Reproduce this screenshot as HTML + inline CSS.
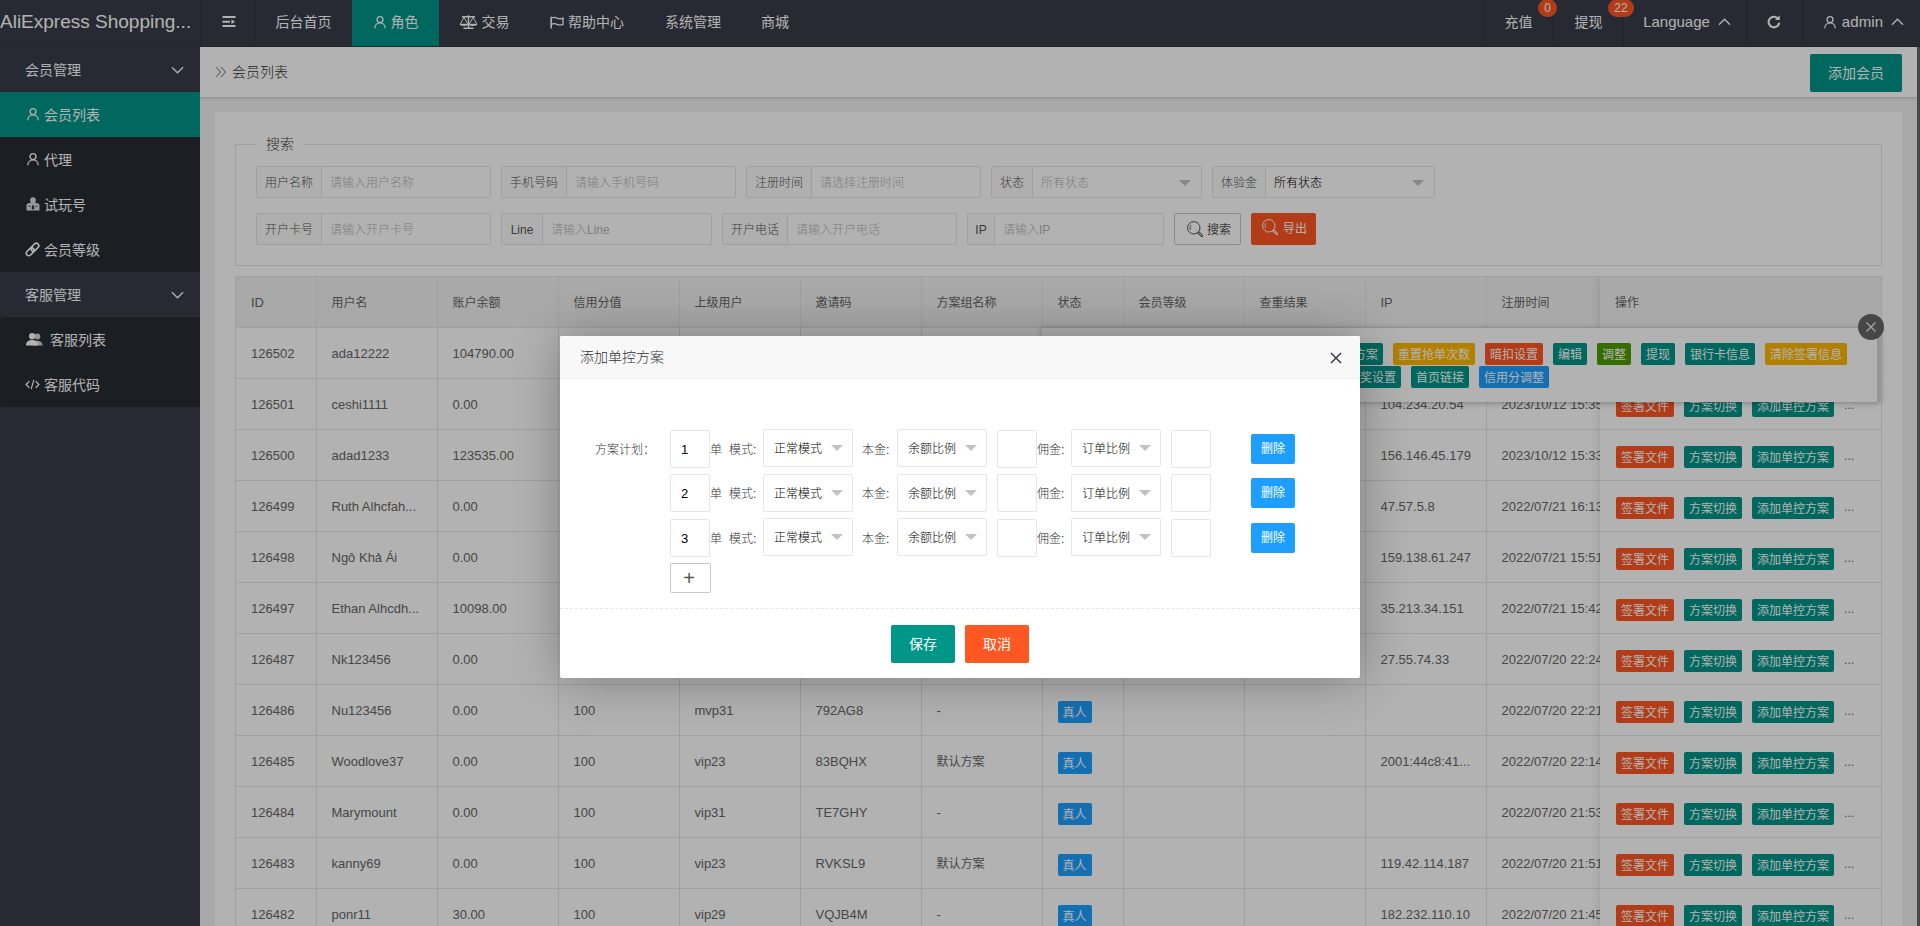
<!DOCTYPE html>
<html lang="zh-CN">
<head>
<meta charset="utf-8">
<title>AliExpress Shopping</title>
<style>
*{box-sizing:border-box;margin:0;padding:0}
html,body{width:1920px;height:926px;overflow:hidden;background:#f2f2f2}
body{font-weight:300;font-family:"Liberation Sans","Noto Sans CJK SC",sans-serif;font-size:14px;color:#666;line-height:1}
#app{position:relative;width:1920px;height:926px;overflow:hidden}
svg{display:inline-block;vertical-align:middle}

/* header */
.hd{font-weight:400;position:absolute;left:0;top:0;width:1920px;height:47px;background:#393D49;border-bottom:1px solid #33363f;color:#fff;z-index:5}
.logo{position:absolute;left:0;top:0;width:200px;height:46px;line-height:43px;font-size:19px;white-space:nowrap;overflow:hidden;color:#fff;letter-spacing:0}
.ni{position:absolute;top:0;height:46px;line-height:44px;text-align:center;font-size:14px;color:#fff;white-space:nowrap}
.ni.on{background:#009688}
.ni .ic{margin-right:4px;position:relative;top:-1px}
.ni.tg{border-left:1px solid #30343f;border-right:1px solid #30343f}
.ni.rb{border-left:1px solid #30343f}
.ni .chevu{margin-left:8px;position:relative;top:-1px}
.bdg{position:absolute;z-index:3;top:-1px;height:18px;line-height:18px;border-radius:9px;background:#FF5722;color:#fff;font-weight:normal;font-size:12px;text-align:center}

/* sidebar */
.sd{font-weight:400;position:absolute;left:0;top:47px;width:200px;height:879px;background:#393D49;color:#fff;z-index:4}
.si{position:relative;height:45px;line-height:47px;font-size:14px;white-space:nowrap;color:#fff}
.si.par{padding-left:25px}
.si.par .chev{position:absolute;right:16px;top:19px}
.si.sub{background:#282b33;padding-left:26px}
.si.sub.on{background:#009688}
.si .ic{margin-right:4px;position:relative;top:-2px}

/* body */
.bd{position:absolute;left:200px;top:47px;width:1717px;height:879px;background:#f2f2f2;overflow:hidden}
.crumb{position:absolute;left:0;top:0;width:1717px;height:50px;background:#fff;box-shadow:0 1px 4px rgba(0,0,0,.18);line-height:50px;padding-left:16px;color:#666;font-size:14px}
.crumb span{margin-left:4px;color:#333}
.addbtn{position:absolute;left:1610px;top:7px;width:92px;height:38px;line-height:38px;border-radius:2px;background:#009688;color:#fff;text-align:center;font-size:14px}
.card{position:absolute;left:15px;top:65px;width:1687px;height:900px;background:#fff}
.fs{position:absolute;left:20px;top:32px;width:1647px;height:122px;border:1px solid #e6e6e6}
.lg{position:absolute;left:20px;top:-10px;background:#fff;padding:0 10px;font-size:14px;line-height:18px;color:#444}
.fg{position:absolute;height:32px;display:flex;border:1px solid #e6e6e6;border-radius:2px;background:#fff}
.fg label{display:block;height:30px;line-height:32px;text-align:center;font-size:12px;color:#555;background:#fbfbfb;border-right:1px solid #e6e6e6}
.fg .inp{width:168px;height:30px;line-height:32px;padding-left:8px;font-size:12px;color:#555;position:relative}
.fg .inp.ph{color:#b5b5b5}
.tri{position:absolute;right:10px;top:13px;border:6px solid transparent;border-top-color:#c2c2c2;border-bottom-width:0}

/* table */
.tw{position:absolute;left:20px;top:164px;width:1647px;height:760px;border-left:1px solid #e6e6e6;border-top:1px solid #e6e6e6;border-right:1px solid #e6e6e6;overflow:hidden}
.tmain{position:absolute;left:0;top:0;width:1364px;overflow:hidden}
.tfix{position:absolute;left:1364px;top:0;width:281px;box-shadow:-1px 0 8px rgba(0,0,0,.12);background:#fff}
.tb{border-collapse:collapse;table-layout:fixed;width:1410px}
.tfix .tb{width:281px}
.tb th,.tb td{border-right:1px solid #e6e6e6;border-bottom:1px solid #e6e6e6;height:51px;padding:0;text-align:left;font-weight:normal;font-size:12px;color:#666}
.lt{font-size:13px}
.tb th{height:50px;background:#f2f2f2}
.cell{padding:0 15px;height:28px;line-height:30px;white-space:nowrap;overflow:hidden}
.xs{display:inline-block;height:22px;line-height:24px;overflow:hidden;padding:0 5px;font-size:12px;color:#fff;border-radius:2px;white-space:nowrap;vertical-align:middle;font-weight:400}
td .cell>.xs.blue{position:relative;top:1px}
.xs.red{background:#FF5722}.xs.teal{background:#009688}.xs.blue{background:#1E9FFF}.xs.warm{background:#FFB800}.xs.green{background:#4E9D00}
.ops{padding-top:4px;padding-left:16px;height:32px;line-height:28px}
.ops .xs{margin-right:10px}
.more{font-size:12px;color:#666;vertical-align:middle;position:relative;top:-1px}

/* tips popover */
.tips{position:absolute;left:842px;top:281px;width:838px;height:74px;background:#fff;box-shadow:0 1px 6px rgba(0,0,0,.3);padding:15px 0 0 0;overflow:hidden}
.tl{position:absolute;height:22px;white-space:nowrap;display:flex}
.tl .xs{margin-left:10px;display:block}
.tsb{position:absolute;right:0;top:0;width:3px;height:74px;background:#d9d9d9}
.tclose{position:absolute;left:1658px;top:267px;width:26px;height:26px;border-radius:13px;background:#666;color:#eee;text-align:center;line-height:24px}

.vsb{position:absolute;left:1917px;top:47px;width:3px;height:879px;background:#676767}
.shade{position:absolute;left:0;top:0;width:1920px;height:926px;background:rgba(0,0,0,.3);z-index:10}

/* modal */
.modal{position:absolute;left:560px;top:336px;width:800px;height:342px;background:#fff;box-shadow:1px 1px 50px rgba(0,0,0,.3);z-index:20;border-radius:2px}
.mt{height:43px;line-height:42px;padding-left:20px;font-size:14px;color:#333;background:#F8F8F8;border-bottom:1px solid #eee;border-radius:2px 2px 0 0}
.mx{position:absolute;right:18px;top:16px}
.mbody{position:absolute;left:0;top:0;width:0;height:0;z-index:21}
.mbody>div{position:absolute}
.ptx{height:38px;line-height:41px;font-size:12px;color:#333;white-space:nowrap}
.pin{width:40px;height:38px;line-height:38px;border:1px solid #e6e6e6;border-radius:2px;padding-left:10px;font-size:13px;color:#000}
.psel{width:90px;height:38px;line-height:39px;border:1px solid #e6e6e6;border-radius:2px;padding-left:10px;font-size:12px;color:#000;white-space:nowrap}
.psel i{position:absolute;right:9px;top:15px;border:6px solid transparent;border-top-color:#c2c2c2;border-bottom-width:0}
.pdel{width:44px;height:30px;line-height:30px;background:#1E9FFF;color:#fff;font-size:12px;text-align:center;border-radius:2px}
.padd{width:41px;height:30px;line-height:29px;border:1px solid #c9c9c9;border-radius:2px;text-align:center;padding-right:3px;font-size:20px;color:#555}
.pline{left:560px;top:608px;width:800px;height:0;border-top:1px dashed #e6e6e6}
.pbtn{top:625px;width:64px;height:38px;line-height:38px;color:#fff;font-size:14px;text-align:center;border-radius:2px}

.lat{font-size:15px}
.ni .rf{position:relative;top:-1px}

.crumb svg{color:#888;position:relative;top:-1.500px;left:-1px;width:12px;height:12px}
.sbtn{position:absolute;width:67px;height:32px;border:1px solid #c9c9c9;border-radius:2px;background:#fff;color:#555;font-size:12px}
.sbtn svg{position:absolute;left:12px;top:7px}
.sbtn span{position:absolute;left:32px;top:0;line-height:33px;font-weight:400}
.sbtn.exp{width:65px;background:#FF5722;border-color:#FF5722;color:#fff;font-weight:400}
.sbtn.exp svg{left:10px;top:5px}
.sbtn.exp span{left:31px;line-height:30px}
.pbtn,.pdel,.addbtn,.bdg{font-weight:400}

</style>
</head>
<body>
<div id="app">

<!-- HEADER -->
<div class="hd">
  <div class="logo">AliExpress Shopping...</div>
  <div class="nav">
    <div class="ni tg" style="left:200px;width:55px"><svg style="position:absolute;left:21px;top:15px" viewBox="0 0 14 13" width="13.500" height="12.500"><path d="M0.500 2h13.500M0.500 7h7.800M0.500 11.500h13.500" stroke="currentColor" stroke-width="2" fill="none"/><path d="M9.800 4.700l3.800 2.300-3.800 2.300z" fill="currentColor"/></svg></div>
    <div class="ni" style="left:255px;width:97px">后台首页</div>
    <div class="ni on" style="left:352px;width:87px"><svg class="ic" viewBox="0 0 14 14" width="14" height="14"><circle cx="7" cy="4.6" r="3" fill="none" stroke="currentColor" stroke-width="1.3"/><path d="M1.8 13.2c0-3.2 2.2-5.3 5.2-5.3s5.2 2.1 5.2 5.3" fill="none" stroke="currentColor" stroke-width="1.3"/></svg><span>角色</span></div>
    <div class="ni" style="left:438px;width:92px"><svg class="ic" viewBox="0 0 19 14" width="19" height="14"><path d="M3 1.800h13M9.500 0.300v13M4.500 13.300h10" fill="none" stroke="currentColor" stroke-width="1.400"/><path d="M5 2.300l-3.600 6.500M5 2.300l3.600 6.500M14 2.300l-3.600 6.500M14 2.300l3.600 6.500" fill="none" stroke="currentColor" stroke-width="1"/><path d="M0.700 8.800h8.600a4.300 2.200 0 0 1-8.600 0zM9.700 8.800h8.600a4.300 2.200 0 0 1-8.600 0z" fill="currentColor"/></svg><span>交易</span></div>
    <div class="ni" style="left:530px;width:115px"><svg class="ic" viewBox="0 0 15 14" width="14" height="13" style="margin-right:4px;margin-left:-1px"><path d="M1.200 0.800v12.600" fill="none" stroke="currentColor" stroke-width="1.700"/><path d="M1.500 2.200c2.200-1.300 4.200-.8 6 0s3.800 1.300 6.500 0v6.800c-2.700 1.300-4.700.8-6.500 0s-3.800-1.300-6 0" fill="none" stroke="currentColor" stroke-width="1.400"/></svg><span>帮助中心</span></div>
    <div class="ni" style="left:645px;width:96px">系统管理</div>
    <div class="ni" style="left:741px;width:68px">商城</div>

    <div class="ni rb" style="left:1483px;width:70px">充值<b class="bdg" style="left:54px;width:19px">0</b></div>
    <div class="ni rb" style="left:1553px;width:70px">提现<b class="bdg" style="left:54px;width:26px">22</b></div>
    <div class="ni rb" style="left:1623px;width:123px;padding-left:4px"><span class="lat">Language</span><svg class="chevu" viewBox="0 0 14 8" width="13" height="8"><path d="M1 7l6-6 6 6" fill="none" stroke="currentColor" stroke-width="1.4"/></svg></div>
    <div class="ni rb" style="left:1746px;width:56px"><svg class="rf" viewBox="0 0 16 16" width="16" height="16" style="margin-left:-2px"><path d="M13.200 8.600a5.300 5.300 0 1 1-1.700-4.500" fill="none" stroke="currentColor" stroke-width="2.100"/><path d="M13.800 1.200v4.800h-4.800z" fill="currentColor"/></svg></div>
    <div class="ni rb" style="left:1802px;width:118px;padding-left:4px"><svg class="ic" viewBox="0 0 14 14" width="14" height="14"><circle cx="7" cy="4.6" r="3" fill="none" stroke="currentColor" stroke-width="1.3"/><path d="M1.8 13.2c0-3.2 2.2-5.3 5.2-5.3s5.2 2.1 5.2 5.3" fill="none" stroke="currentColor" stroke-width="1.3"/></svg><span class="lat" style="letter-spacing:.15px;margin-left:1px">admin</span><svg class="chevu" viewBox="0 0 14 8" width="13" height="8"><path d="M1 7l6-6 6 6" fill="none" stroke="currentColor" stroke-width="1.4"/></svg></div>
  </div>
</div>

<!-- SIDEBAR -->
<div class="sd">
  <div class="si par">会员管理<svg class="chev" viewBox="0 0 14 8" width="13" height="8"><path d="M1 1l6 6 6-6" fill="none" stroke="currentColor" stroke-width="1.4"/></svg></div>
  <div class="si sub on"><svg class="ic" viewBox="0 0 14 14" width="14" height="14"><circle cx="7" cy="4.6" r="3" fill="none" stroke="currentColor" stroke-width="1.3"/><path d="M1.8 13.2c0-3.2 2.2-5.3 5.2-5.3s5.2 2.1 5.2 5.3" fill="none" stroke="currentColor" stroke-width="1.3"/></svg><span>会员列表</span></div>
  <div class="si sub"><svg class="ic" viewBox="0 0 14 14" width="14" height="14"><circle cx="7" cy="4.6" r="3" fill="none" stroke="currentColor" stroke-width="1.3"/><path d="M1.8 13.2c0-3.2 2.2-5.3 5.2-5.3s5.2 2.1 5.2 5.3" fill="none" stroke="currentColor" stroke-width="1.3"/></svg><span>代理</span></div>
  <div class="si sub"><svg class="ic" viewBox="0 0 14 14" width="14" height="14"><path d="M7 0.300a2.900 2.900 0 0 1 2.900 2.900c0 .9-.4 1.700-1 2.200l3.300 1.100c.9.300 1.300 1 1.300 1.900v5.100h-13v-5.100c0-.9.400-1.600 1.300-1.900l3.300-1.100c-.6-.5-1-1.300-1-2.200a2.900 2.900 0 0 1 2.900-2.900z" fill="currentColor" opacity=".85"/><path d="M7 7l1.500 4.300-1.500 1.500-1.500-1.500z" fill="#282b33"/><path d="M2.600 9.200h2M9.400 9.200h2" stroke="#282b33" stroke-width="1"/></svg><span>试玩号</span></div>
  <div class="si sub" style="border-radius:0 0 0 3px"><svg class="ic" viewBox="0 0 15 15" width="15" height="15" style="margin-left:-1px;margin-right:4px"><g transform="rotate(-45 7.500 7.500)" fill="none" stroke="currentColor" stroke-width="1.700"><rect x="-0.300" y="5" width="9" height="5" rx="2.500"/><rect x="6.300" y="5" width="9" height="5" rx="2.500"/></g></svg><span>会员等级</span></div>
  <div class="si par">客服管理<svg class="chev" viewBox="0 0 14 8" width="13" height="8"><path d="M1 1l6 6 6-6" fill="none" stroke="currentColor" stroke-width="1.4"/></svg></div>
  <div class="si sub" style="border-radius:3px 0 0 0"><svg class="ic" viewBox="0 0 20 14" width="19" height="14.500" style="margin-left:-1px"><path d="M13 1a3 3 0 0 1 0 6.200 3 3 0 0 1 0-6.200zM8 13.500c0-3 2-5 5-5s5.500 2 5.500 5z" fill="currentColor" opacity=".8"/><path d="M7.500 0.500a3.200 3.200 0 0 1 0 6.600 3.200 3.200 0 0 1 0-6.600zM1 13.500c0-3.400 2.400-5.600 6.500-5.600s6.500 2.200 6.500 5.600z" fill="currentColor"/></svg><span style="margin-left:2px">客服列表</span></div>
  <div class="si sub" style="border-radius:0 0 0 3px"><svg class="ic" viewBox="0 0 16 12" width="15" height="11" style="margin-left:-1.500px;margin-right:4.500px"><path d="M4.500 2.500l-3.500 3.500 3.500 3.500M11.500 2.500l3.500 3.500-3.500 3.500M9.500 1l-3 10" fill="none" stroke="currentColor" stroke-width="1.300"/></svg><span>客服代码</span></div>
</div>

<!-- MAIN BODY -->
<div class="bd">
  <div class="crumb"><svg viewBox="0 0 12 12" width="11" height="11"><path d="M1 1l4.500 5-4.500 5M6 1l4.500 5-4.500 5" fill="none" stroke="currentColor" stroke-width="1.100"/></svg><span>会员列表</span><div class="addbtn">添加会员</div></div>
  <div class="card">
    <div class="fs"><div class="lg">搜索</div>
      <div class="fg" style="left:20px;top:21px"><label style="width:65px">用户名称</label><div class="inp ph">请输入用户名称</div></div>
      <div class="fg" style="left:265px;top:21px"><label style="width:65px">手机号码</label><div class="inp ph">请输入手机号码</div></div>
      <div class="fg" style="left:510px;top:21px"><label style="width:65px">注册时间</label><div class="inp ph">请选择注册时间</div></div>
      <div class="fg" style="left:755px;top:21px"><label style="width:41px">状态</label><div class="inp ph">所有状态<i class="tri"></i></div></div>
      <div class="fg" style="left:976px;top:21px"><label style="width:53px">体验金</label><div class="inp" style="color:#000">所有状态<i class="tri"></i></div></div>

      <div class="fg" style="left:20px;top:68px"><label style="width:65px">开户卡号</label><div class="inp ph">请输入开户卡号</div></div>
      <div class="fg" style="left:265px;top:68px"><label style="width:41px">Line</label><div class="inp ph">请输入Line</div></div>
      <div class="fg" style="left:486px;top:68px"><label style="width:65px">开户电话</label><div class="inp ph">请输入开户电话</div></div>
      <div class="fg" style="left:731px;top:68px"><label style="width:27px">IP</label><div class="inp ph">请输入IP</div></div>
      <div class="sbtn" style="left:938px;top:68px"><svg viewBox="0 0 16 16" width="16" height="16"><circle cx="6.800" cy="6.800" r="6.200" fill="none" stroke="currentColor" stroke-width="1"/><path d="M3.500 8.800a3.700 3.700 0 0 1 .7-4.700" fill="none" stroke="currentColor" stroke-width=".9"/><path d="M11.600 11.600l3.300 3.300" stroke="currentColor" stroke-width="2.600" stroke-linecap="round" fill="none"/><path d="M11.900 11.900l2.800 2.800" stroke="#fff" stroke-width=".9" stroke-linecap="round" fill="none"/></svg><span>搜索</span></div>
      <div class="sbtn exp" style="left:1015px;top:68px"><svg viewBox="0 0 16 16" width="16" height="16"><circle cx="6.800" cy="6.800" r="6.200" fill="none" stroke="currentColor" stroke-width="1"/><path d="M3.500 8.800a3.700 3.700 0 0 1 .7-4.700" fill="none" stroke="currentColor" stroke-width=".9"/><path d="M11.600 11.600l3.300 3.300" stroke="currentColor" stroke-width="2.600" stroke-linecap="round" fill="none"/><path d="M11.900 11.900l2.800 2.800" stroke="#FF5722" stroke-width=".9" stroke-linecap="round" fill="none"/></svg><span>导出</span></div>
    </div>

    <div class="tw">
      <div class="tmain"><table class="tb"><colgroup><col style="width:80px"><col style="width:121px"><col style="width:121px"><col style="width:121px"><col style="width:121px"><col style="width:121px"><col style="width:121px"><col style="width:81px"><col style="width:121px"><col style="width:121px"><col style="width:121px"><col style="width:160px"></colgroup><thead><tr><th><div class="cell lt">ID</div></th><th><div class="cell">用户名</div></th><th><div class="cell">账户余额</div></th><th><div class="cell">信用分值</div></th><th><div class="cell">上级用户</div></th><th><div class="cell">邀请码</div></th><th><div class="cell">方案组名称</div></th><th><div class="cell">状态</div></th><th><div class="cell">会员等级</div></th><th><div class="cell">查重结果</div></th><th><div class="cell lt">IP</div></th><th><div class="cell">注册时间</div></th></tr></thead><tbody><tr><td><div class="cell lt">126502</div></td><td><div class="cell lt">ada12222</div></td><td><div class="cell lt">104790.00</div></td><td><div class="cell lt">100</div></td><td><div class="cell lt">vip23</div></td><td><div class="cell lt">A7KQ2M</div></td><td><div class="cell">默认方案</div></td><td><div class="cell"><span class="xs blue">真人</span></div></td><td><div class="cell lt">VIP1</div></td><td><div class="cell lt"></div></td><td><div class="cell lt">104.234.20.54</div></td><td><div class="cell lt">2023/10/12 15:37</div></td></tr><tr><td><div class="cell lt">126501</div></td><td><div class="cell lt">ceshi1111</div></td><td><div class="cell lt">0.00</div></td><td><div class="cell lt">100</div></td><td><div class="cell lt">vip23</div></td><td><div class="cell lt">C3ESH1</div></td><td><div class="cell lt">-</div></td><td><div class="cell"><span class="xs blue">真人</span></div></td><td><div class="cell lt">VIP1</div></td><td><div class="cell lt"></div></td><td><div class="cell lt">104.234.20.54</div></td><td><div class="cell lt">2023/10/12 15:35</div></td></tr><tr><td><div class="cell lt">126500</div></td><td><div class="cell lt">adad1233</div></td><td><div class="cell lt">123535.00</div></td><td><div class="cell lt">100</div></td><td><div class="cell lt">vip23</div></td><td><div class="cell lt">AD4D12</div></td><td><div class="cell">默认方案</div></td><td><div class="cell"><span class="xs blue">真人</span></div></td><td><div class="cell lt">VIP1</div></td><td><div class="cell lt"></div></td><td><div class="cell lt">156.146.45.179</div></td><td><div class="cell lt">2023/10/12 15:33</div></td></tr><tr><td><div class="cell lt">126499</div></td><td><div class="cell lt">Ruth Alhcfah...</div></td><td><div class="cell lt">0.00</div></td><td><div class="cell lt">100</div></td><td><div class="cell lt">vip31</div></td><td><div class="cell lt">RU7HAL</div></td><td><div class="cell lt">-</div></td><td><div class="cell"><span class="xs blue">真人</span></div></td><td><div class="cell lt"></div></td><td><div class="cell lt"></div></td><td><div class="cell lt">47.57.5.8</div></td><td><div class="cell lt">2022/07/21 16:13</div></td></tr><tr><td><div class="cell lt">126498</div></td><td><div class="cell lt">Ngô Khả Ái</div></td><td><div class="cell lt">0.00</div></td><td><div class="cell lt">100</div></td><td><div class="cell lt">vip29</div></td><td><div class="cell lt">NG0KHA</div></td><td><div class="cell lt">-</div></td><td><div class="cell"><span class="xs blue">真人</span></div></td><td><div class="cell lt"></div></td><td><div class="cell lt"></div></td><td><div class="cell lt">159.138.61.247</div></td><td><div class="cell lt">2022/07/21 15:51</div></td></tr><tr><td><div class="cell lt">126497</div></td><td><div class="cell lt">Ethan Alhcdh...</div></td><td><div class="cell lt">10098.00</div></td><td><div class="cell lt">100</div></td><td><div class="cell lt">vip31</div></td><td><div class="cell lt">E7HANA</div></td><td><div class="cell">默认方案</div></td><td><div class="cell"><span class="xs blue">真人</span></div></td><td><div class="cell lt"></div></td><td><div class="cell lt"></div></td><td><div class="cell lt">35.213.34.151</div></td><td><div class="cell lt">2022/07/21 15:42</div></td></tr><tr><td><div class="cell lt">126487</div></td><td><div class="cell lt">Nk123456</div></td><td><div class="cell lt">0.00</div></td><td><div class="cell lt">100</div></td><td><div class="cell lt">mvp31</div></td><td><div class="cell lt">NK1234</div></td><td><div class="cell lt">-</div></td><td><div class="cell"><span class="xs blue">真人</span></div></td><td><div class="cell lt"></div></td><td><div class="cell lt"></div></td><td><div class="cell lt">27.55.74.33</div></td><td><div class="cell lt">2022/07/20 22:24</div></td></tr><tr><td><div class="cell lt">126486</div></td><td><div class="cell lt">Nu123456</div></td><td><div class="cell lt">0.00</div></td><td><div class="cell lt">100</div></td><td><div class="cell lt">mvp31</div></td><td><div class="cell lt">792AG8</div></td><td><div class="cell lt">-</div></td><td><div class="cell"><span class="xs blue">真人</span></div></td><td><div class="cell lt"></div></td><td><div class="cell lt"></div></td><td><div class="cell lt"></div></td><td><div class="cell lt">2022/07/20 22:21</div></td></tr><tr><td><div class="cell lt">126485</div></td><td><div class="cell lt">Woodlove37</div></td><td><div class="cell lt">0.00</div></td><td><div class="cell lt">100</div></td><td><div class="cell lt">vip23</div></td><td><div class="cell lt">83BQHX</div></td><td><div class="cell">默认方案</div></td><td><div class="cell"><span class="xs blue">真人</span></div></td><td><div class="cell lt"></div></td><td><div class="cell lt"></div></td><td><div class="cell lt">2001:44c8:41...</div></td><td><div class="cell lt">2022/07/20 22:14</div></td></tr><tr><td><div class="cell lt">126484</div></td><td><div class="cell lt">Marymount</div></td><td><div class="cell lt">0.00</div></td><td><div class="cell lt">100</div></td><td><div class="cell lt">vip31</div></td><td><div class="cell lt">TE7GHY</div></td><td><div class="cell lt">-</div></td><td><div class="cell"><span class="xs blue">真人</span></div></td><td><div class="cell lt"></div></td><td><div class="cell lt"></div></td><td><div class="cell lt"></div></td><td><div class="cell lt">2022/07/20 21:53</div></td></tr><tr><td><div class="cell lt">126483</div></td><td><div class="cell lt">kanny69</div></td><td><div class="cell lt">0.00</div></td><td><div class="cell lt">100</div></td><td><div class="cell lt">vip23</div></td><td><div class="cell lt">RVKSL9</div></td><td><div class="cell">默认方案</div></td><td><div class="cell"><span class="xs blue">真人</span></div></td><td><div class="cell lt"></div></td><td><div class="cell lt"></div></td><td><div class="cell lt">119.42.114.187</div></td><td><div class="cell lt">2022/07/20 21:51</div></td></tr><tr><td><div class="cell lt">126482</div></td><td><div class="cell lt">ponr11</div></td><td><div class="cell lt">30.00</div></td><td><div class="cell lt">100</div></td><td><div class="cell lt">vip29</div></td><td><div class="cell lt">VQJB4M</div></td><td><div class="cell lt">-</div></td><td><div class="cell"><span class="xs blue">真人</span></div></td><td><div class="cell lt"></div></td><td><div class="cell lt"></div></td><td><div class="cell lt">182.232.110.10</div></td><td><div class="cell lt">2022/07/20 21:45</div></td></tr></tbody></table></div>
      <div class="tfix"><table class="tb"><colgroup><col style="width:281px"></colgroup><thead><tr><th><div class="cell">操作</div></th></tr></thead><tbody><tr><td><div class="cell ops"><span class="xs red">签署文件</span><span class="xs teal">方案切换</span><span class="xs teal">添加单控方案</span><span class="more">...</span></div></td></tr><tr><td><div class="cell ops"><span class="xs red">签署文件</span><span class="xs teal">方案切换</span><span class="xs teal">添加单控方案</span><span class="more">...</span></div></td></tr><tr><td><div class="cell ops"><span class="xs red">签署文件</span><span class="xs teal">方案切换</span><span class="xs teal">添加单控方案</span><span class="more">...</span></div></td></tr><tr><td><div class="cell ops"><span class="xs red">签署文件</span><span class="xs teal">方案切换</span><span class="xs teal">添加单控方案</span><span class="more">...</span></div></td></tr><tr><td><div class="cell ops"><span class="xs red">签署文件</span><span class="xs teal">方案切换</span><span class="xs teal">添加单控方案</span><span class="more">...</span></div></td></tr><tr><td><div class="cell ops"><span class="xs red">签署文件</span><span class="xs teal">方案切换</span><span class="xs teal">添加单控方案</span><span class="more">...</span></div></td></tr><tr><td><div class="cell ops"><span class="xs red">签署文件</span><span class="xs teal">方案切换</span><span class="xs teal">添加单控方案</span><span class="more">...</span></div></td></tr><tr><td><div class="cell ops"><span class="xs red">签署文件</span><span class="xs teal">方案切换</span><span class="xs teal">添加单控方案</span><span class="more">...</span></div></td></tr><tr><td><div class="cell ops"><span class="xs red">签署文件</span><span class="xs teal">方案切换</span><span class="xs teal">添加单控方案</span><span class="more">...</span></div></td></tr><tr><td><div class="cell ops"><span class="xs red">签署文件</span><span class="xs teal">方案切换</span><span class="xs teal">添加单控方案</span><span class="more">...</span></div></td></tr><tr><td><div class="cell ops"><span class="xs red">签署文件</span><span class="xs teal">方案切换</span><span class="xs teal">添加单控方案</span><span class="more">...</span></div></td></tr><tr><td><div class="cell ops"><span class="xs red">签署文件</span><span class="xs teal">方案切换</span><span class="xs teal">添加单控方案</span><span class="more">...</span></div></td></tr></tbody></table></div>
    </div>
  </div>

  <!-- table tips popover -->
  <div class="tips">
    <div class="tl" style="right:33px;top:15px"><span class="xs red">签署文件</span><span class="xs teal">方案切换</span><span class="xs teal">添加单控方案</span><span class="xs teal">方案</span><span class="xs warm">重置抢单次数</span><span class="xs red">暗扣设置</span><span class="xs teal">编辑</span><span class="xs green">调整</span><span class="xs teal">提现</span><span class="xs teal">银行卡信息</span><span class="xs warm">清除签署信息</span></div>
    <div class="tl" style="right:331px;top:38px"><span class="xs teal">连单设置</span><span class="xs teal">中奖设置</span><span class="xs teal">首页链接</span><span class="xs blue">信用分调整</span></div>
    <div class="tsb"></div>
  </div>
  <div class="tclose"><svg viewBox="0 0 12 12" width="12" height="12"><path d="M1.500 1.500l9 9M10.500 1.500l-9 9" stroke="currentColor" stroke-width="1.300" fill="none"/></svg></div>
</div>

<div class="vsb"></div>
<div class="shade"></div>

<!-- MODAL -->
<div class="modal">
  <div class="mt">添加单控方案<svg class="mx" viewBox="0 0 12 12" width="12" height="12"><path d="M1 1l10 10M11 1l-10 10" stroke="#2e2d3c" stroke-width="1.400" fill="none"/></svg></div>
</div>
<div class="mbody">
  <div class="ptx lab" style="left:595px;top:430px">方案计划：</div>
  <div class="pin" style="left:670px;top:430px">1</div><div class="ptx" style="left:710px;top:430px">单</div><div class="ptx" style="left:729px;top:430px">模式:</div><div class="psel" style="left:763px;top:429px">正常模式<i></i></div><div class="ptx" style="left:862px;top:430px">本金:</div><div class="psel" style="left:897px;top:429px">余额比例<i></i></div><div class="pin" style="left:997px;top:430px"></div><div class="ptx" style="left:1037px;top:430px">佣金:</div><div class="psel" style="left:1071px;top:429px">订单比例<i></i></div><div class="pin" style="left:1171px;top:430px"></div><div class="pdel" style="left:1251px;top:434px">删除</div>
  <div class="pin" style="left:670px;top:474px">2</div><div class="ptx" style="left:710px;top:474px">单</div><div class="ptx" style="left:729px;top:474px">模式:</div><div class="psel" style="left:763px;top:474px">正常模式<i></i></div><div class="ptx" style="left:862px;top:474px">本金:</div><div class="psel" style="left:897px;top:474px">余额比例<i></i></div><div class="pin" style="left:997px;top:474px"></div><div class="ptx" style="left:1037px;top:474px">佣金:</div><div class="psel" style="left:1071px;top:474px">订单比例<i></i></div><div class="pin" style="left:1171px;top:474px"></div><div class="pdel" style="left:1251px;top:478px">删除</div>
  <div class="pin" style="left:670px;top:519px">3</div><div class="ptx" style="left:710px;top:519px">单</div><div class="ptx" style="left:729px;top:519px">模式:</div><div class="psel" style="left:763px;top:518px">正常模式<i></i></div><div class="ptx" style="left:862px;top:519px">本金:</div><div class="psel" style="left:897px;top:518px">余额比例<i></i></div><div class="pin" style="left:997px;top:519px"></div><div class="ptx" style="left:1037px;top:519px">佣金:</div><div class="psel" style="left:1071px;top:518px">订单比例<i></i></div><div class="pin" style="left:1171px;top:519px"></div><div class="pdel" style="left:1251px;top:523px">删除</div>
  <div class="padd" style="left:670px;top:563px">+</div>
  <div class="pline"></div>
  <div class="pbtn" style="left:891px;background:#009688">保存</div>
  <div class="pbtn" style="left:965px;background:#FF5722">取消</div>
</div>

</div>
</body>
</html>
